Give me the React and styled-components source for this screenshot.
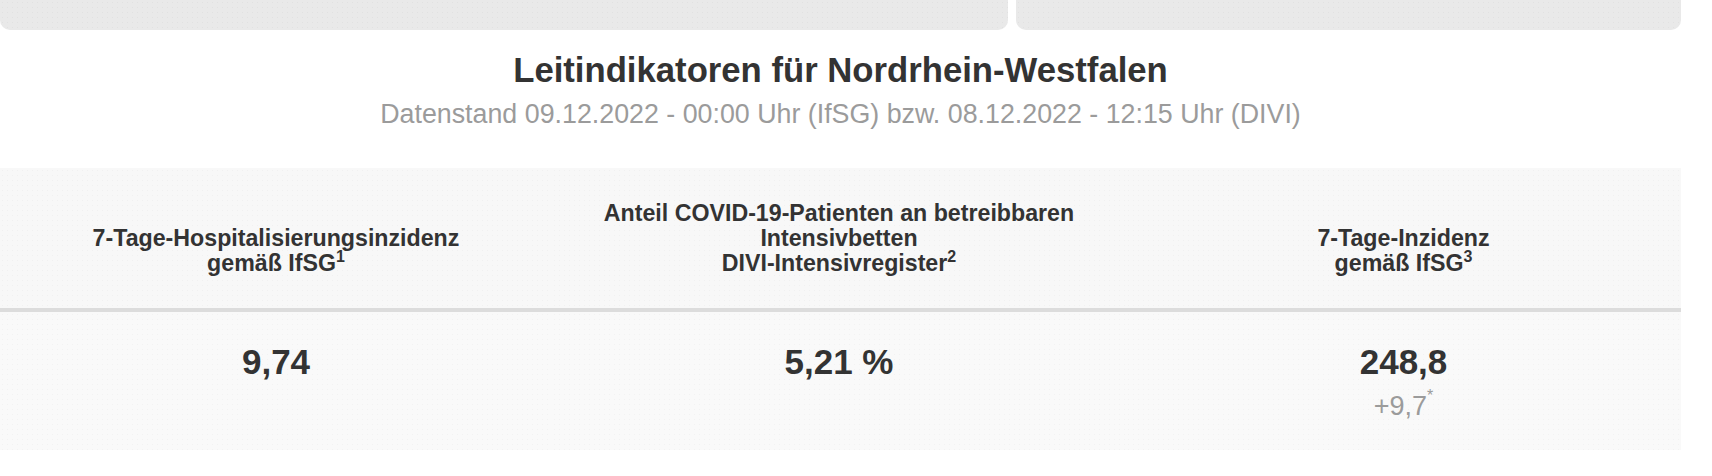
import React from "react";
import styled, { createGlobalStyle } from "styled-components";

const GlobalStyle = createGlobalStyle`
  html, body {
    margin: 0;
    padding: 0;
    background: #ffffff;
  }
  body {
    font-family: "Liberation Sans", Arial, Helvetica, sans-serif;
    color: #333333;
  }
`;

const dots = (base, dot) => `
  background-color: ${base};
  background-image: radial-gradient(${dot} 0.7px, transparent 0.9px);
  background-size: 5px 5px;
`;

const Page = styled.div`
  width: 1681px;
`;

const CardRow = styled.div`
  display: flex;
  gap: 8px;
  height: 30px;
`;

const Card = styled.div`
  width: ${(p) => p.$width}px;
  height: 100%;
  border-radius: 0 0 10px 10px;
  ${dots("#e9e9e9", "#e1e1e1")}
`;

const Heading = styled.header`
  display: flex;
  flex-direction: column;
  align-items: center;
  padding-top: 20px;
`;

const Title = styled.h2`
  margin: 0;
  font-size: 34.7px;
  line-height: 40px;
  font-weight: 700;
  color: #333333;
`;

const Subtitle = styled.p`
  margin: 8px 0 0;
  font-size: 26.8px;
  line-height: 32px;
  color: #9b9b9b;
`;

const Table = styled.section`
  margin-top: 38px;
  display: grid;
  grid-template-columns: 552px 574px 555px;
`;

const HeadCell = styled.div`
  height: 108px;
  padding-bottom: 32px;
  display: flex;
  align-items: flex-end;
  justify-content: center;
  text-align: center;
  font-size: 23.2px;
  line-height: 25px;
  font-weight: 700;
  color: #333333;
  border-bottom: 4px solid #dcdcdc;
  ${dots("#f8f8f8", "#f1f1f1")}
`;

const BodyCell = styled.div`
  height: 108px;
  padding-top: 30px;
  display: flex;
  flex-direction: column;
  align-items: center;
  ${dots("#f9f9f9", "#f2f2f2")}
`;

const Value = styled.div`
  font-size: 35px;
  line-height: 40px;
  font-weight: 700;
  color: #333333;
`;

const Delta = styled.div`
  margin-top: 9px;
  font-size: 27px;
  line-height: 30px;
  color: #9b9b9b;
`;

const Sup = styled.sup`
  font-size: ${(p) => p.$size || 16}px;
  line-height: 0;
  vertical-align: ${(p) => p.$raise || "super"};
  font-weight: inherit;
`;

const columns = [
  {
    head: (
      <>
        7-Tage-Hospitalisierungsinzidenz
        <br />
        gemäß IfSG<Sup>1</Sup>
      </>
    ),
    value: "9,74",
  },
  {
    head: (
      <>
        Anteil COVID-19-Patienten an betreibbaren
        <br />
        Intensivbetten
        <br />
        DIVI-Intensivregister<Sup>2</Sup>
      </>
    ),
    value: "5,21 %",
  },
  {
    head: (
      <>
        7-Tage-Inzidenz
        <br />
        gemäß IfSG<Sup>3</Sup>
      </>
    ),
    value: "248,8",
    delta: "+9,7",
  },
];

export default function App() {
  return (
    <>
      <GlobalStyle />
      <Page>
        <CardRow>
          <Card $width={1008} />
          <Card $width={665} />
        </CardRow>
        <Heading>
          <Title>Leitindikatoren für Nordrhein-Westfalen</Title>
          <Subtitle>
            Datenstand 09.12.2022 - 00:00 Uhr (IfSG) bzw. 08.12.2022 - 12:15 Uhr (DIVI)
          </Subtitle>
        </Heading>
        <Table>
          {columns.map((c, i) => (
            <HeadCell key={"h" + i}>
              <span>{c.head}</span>
            </HeadCell>
          ))}
          {columns.map((c, i) => (
            <BodyCell key={"b" + i}>
              <Value>{c.value}</Value>
              {c.delta && (
                <Delta>
                  {c.delta}
                  <Sup $size={16} $raise="14px">*</Sup>
                </Delta>
              )}
            </BodyCell>
          ))}
        </Table>
      </Page>
    </>
  );
}
